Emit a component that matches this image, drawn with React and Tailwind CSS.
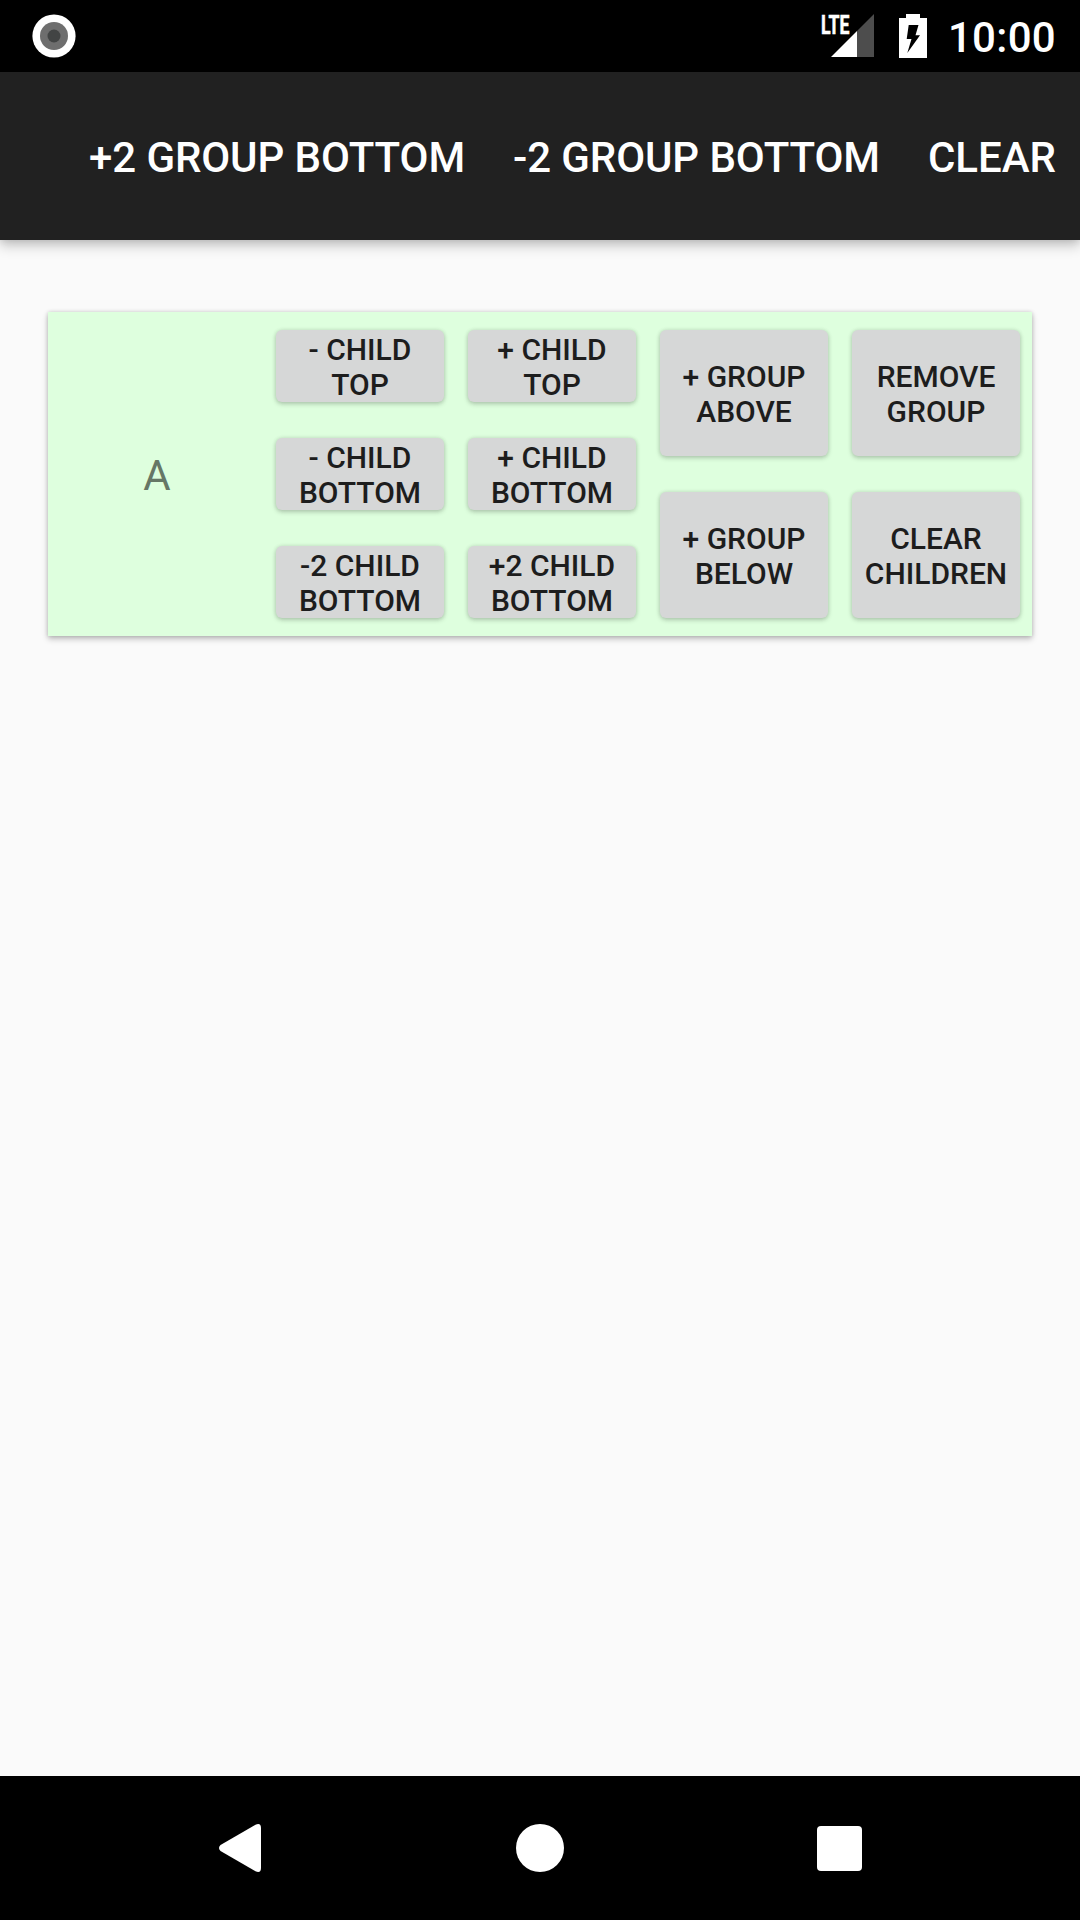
const SHADOW =
  "shadow-[0_2px_5px_rgba(0,0,0,0.2),0_0_4px_rgba(0,0,0,0.1)]";

function Cell({ lines }) {
  return (
    <div className="flex flex-1 px-3 py-[18px]">
      <button
        className={`flex w-full flex-col items-center justify-center rounded-[6px] bg-[#d6d7d7] pt-[2px] text-[30px] font-medium leading-[35px] text-[#1d1d1d] ${SHADOW}`}
      >
        {lines.map((line) => (
          <span key={line} className="whitespace-nowrap">
            {line}
          </span>
        ))}
      </button>
    </div>
  );
}

const COLUMNS = [
  [["- CHILD", "TOP"], ["- CHILD", "BOTTOM"], ["-2 CHILD", "BOTTOM"]],
  [["+ CHILD", "TOP"], ["+ CHILD", "BOTTOM"], ["+2 CHILD", "BOTTOM"]],
  [["+ GROUP", "ABOVE"], ["+ GROUP", "BELOW"]],
  [["REMOVE", "GROUP"], ["CLEAR", "CHILDREN"]],
];

function StatusBar() {
  return (
    <div className="flex h-[72px] items-center justify-between bg-black pl-8 pr-6">
      <svg width="44" height="72" viewBox="0 0 44 72">
        <circle cx="22" cy="36" r="21.6" fill="#fff" />
        <circle cx="22" cy="36" r="14" fill="#6e6e6e" />
        <circle cx="22" cy="36" r="6.5" fill="#424444" />
      </svg>
      <div className="flex items-center">
        <svg width="56" height="72" viewBox="820 0 56 72" className="mr-[22px]">
          <path d="M874 14V57H857V31Z" fill="#4d4d4d" />
          <path d="M831 57L857 31V57Z" fill="#fff" />
          <text
            x="821"
            y="33.5"
            fill="#fff"
            stroke="#fff"
            strokeWidth="0.6"
            fontFamily="Roboto"
            fontWeight="700"
            fontSize="26"
            textLength="28.5"
            lengthAdjust="spacingAndGlyphs"
          >
            LTE
          </text>
        </svg>
        <svg width="30" height="72" viewBox="898 0 30 72" className="mr-[22px]">
          <path
            fillRule="evenodd"
            fill="#fff"
            d="M906 14H920V18H927V58H899V18H906ZM908.700 25L906.700 39H911.500L907.300 53L920 35.300H915.500L918.500 25Z"
          />
        </svg>
        <span className="flex w-[106px] justify-end whitespace-nowrap pt-1 text-[42px] font-medium leading-[50px] tracking-[0.3px] text-white">
          10:00
        </span>
      </div>
    </div>
  );
}

function NavBar() {
  return (
    <div className="flex h-36 items-center bg-black pl-[204px]">
      <svg width="72" height="72" viewBox="204 1812 72 72">
        <path
          fill="#fff"
          d="M220.500 1845L255.500 1824.700Q261 1822.500 261 1828V1868Q261 1873.500 255.500 1871.300L220.500 1851Q217.500 1848 220.500 1845Z"
        />
      </svg>
      <div className="ml-[240px] h-12 w-12 rounded-full bg-white" />
      <div className="ml-[253px] h-[45px] w-[45px] rounded-[4px] bg-white" />
    </div>
  );
}

export default function App() {
  return (
    <div className="flex h-[1920px] w-[1080px] flex-col overflow-hidden bg-[#fafafa] font-['Roboto',sans-serif]">
      <StatusBar />
      <header className="flex h-[168px] items-center justify-end gap-12 whitespace-nowrap bg-[#212121] pr-6 pt-1 text-[42px] font-medium leading-[50px] text-white shadow-[0_6px_12px_rgba(0,0,0,0.2),0_0_8px_rgba(0,0,0,0.14)]">
        <span className="tracking-[-0.1px]">+2 GROUP BOTTOM</span>
        <span className="tracking-[-0.1px]">-2 GROUP BOTTOM</span>
        <span>CLEAR</span>
      </header>
      <main className="flex-1 px-12 pt-[72px]">
        <section className="flex h-[324px] bg-[#deffde] shadow-[0_3px_6px_rgba(0,0,0,0.24),0_0_4px_rgba(0,0,0,0.15)]">
          <div className="flex flex-1 items-center justify-center pl-[2px] pt-1 text-[42px] leading-[50px] text-[#667766]">
            A
          </div>
          {COLUMNS.map((cells, i) => (
            <div key={i} className="flex w-48 flex-col">
              {cells.map((lines) => (
                <Cell key={lines.join(" ")} lines={lines} />
              ))}
            </div>
          ))}
        </section>
      </main>
      <NavBar />
    </div>
  );
}
